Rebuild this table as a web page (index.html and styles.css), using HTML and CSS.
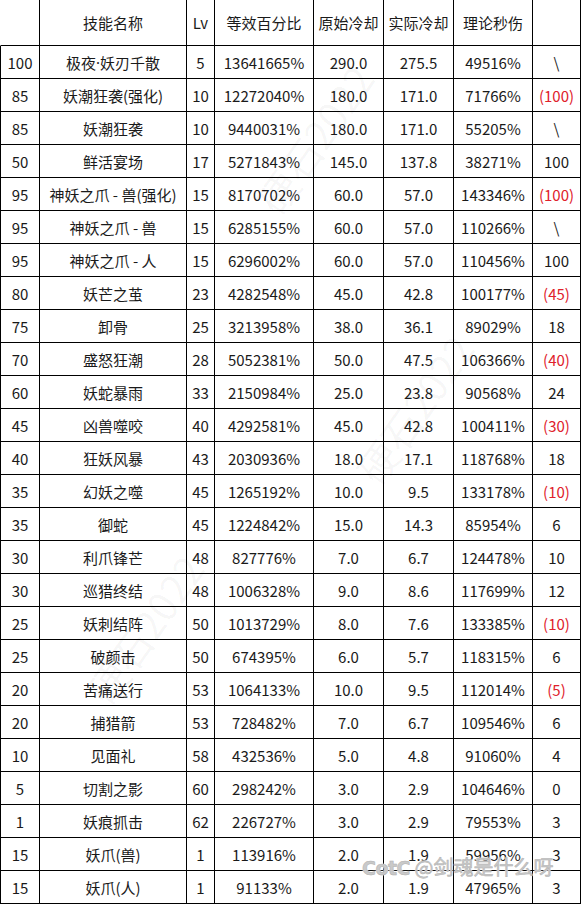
FILE: index.html
```html
<!DOCTYPE html>
<html lang="zh-CN">
<head>
<meta charset="utf-8">
<link rel="stylesheet" href="styles.css">
</head>
<body>
<div class="sheet">
  <div class="row head">
    <div class="c"></div><div class="c">技能名称</div><div class="c">Lv</div><div class="c">等效百分比</div><div class="c">原始冷却</div><div class="c">实际冷却</div><div class="c">理论秒伤</div><div class="c"></div>
  </div>
  <div class="row"><div class="c">100</div><div class="c">极夜<span class="dot">·</span>妖刃千散</div><div class="c">5</div><div class="c">13641665%</div><div class="c">290.0</div><div class="c">275.5</div><div class="c">49516%</div><div class="c">\</div></div>
  <div class="row"><div class="c">85</div><div class="c">妖潮狂袭(强化)</div><div class="c">10</div><div class="c">12272040%</div><div class="c">180.0</div><div class="c">171.0</div><div class="c">71766%</div><div class="c red">(100)</div></div>
  <div class="row"><div class="c">85</div><div class="c">妖潮狂袭</div><div class="c">10</div><div class="c">9440031%</div><div class="c">180.0</div><div class="c">171.0</div><div class="c">55205%</div><div class="c">\</div></div>
  <div class="row"><div class="c">50</div><div class="c">鲜活宴场</div><div class="c">17</div><div class="c">5271843%</div><div class="c">145.0</div><div class="c">137.8</div><div class="c">38271%</div><div class="c">100</div></div>
  <div class="row"><div class="c">95</div><div class="c">神妖之爪 - 兽(强化)</div><div class="c">15</div><div class="c">8170702%</div><div class="c">60.0</div><div class="c">57.0</div><div class="c">143346%</div><div class="c red">(100)</div></div>
  <div class="row"><div class="c">95</div><div class="c">神妖之爪 - 兽</div><div class="c">15</div><div class="c">6285155%</div><div class="c">60.0</div><div class="c">57.0</div><div class="c">110266%</div><div class="c">\</div></div>
  <div class="row"><div class="c">95</div><div class="c">神妖之爪 - 人</div><div class="c">15</div><div class="c">6296002%</div><div class="c">60.0</div><div class="c">57.0</div><div class="c">110456%</div><div class="c">100</div></div>
  <div class="row"><div class="c">80</div><div class="c">妖芒之茧</div><div class="c">23</div><div class="c">4282548%</div><div class="c">45.0</div><div class="c">42.8</div><div class="c">100177%</div><div class="c red">(45)</div></div>
  <div class="row"><div class="c">75</div><div class="c">卸骨</div><div class="c">25</div><div class="c">3213958%</div><div class="c">38.0</div><div class="c">36.1</div><div class="c">89029%</div><div class="c">18</div></div>
  <div class="row"><div class="c">70</div><div class="c">盛怒狂潮</div><div class="c">28</div><div class="c">5052381%</div><div class="c">50.0</div><div class="c">47.5</div><div class="c">106366%</div><div class="c red">(40)</div></div>
  <div class="row"><div class="c">60</div><div class="c">妖蛇暴雨</div><div class="c">33</div><div class="c">2150984%</div><div class="c">25.0</div><div class="c">23.8</div><div class="c">90568%</div><div class="c">24</div></div>
  <div class="row"><div class="c">45</div><div class="c">凶兽噬咬</div><div class="c">40</div><div class="c">4292581%</div><div class="c">45.0</div><div class="c">42.8</div><div class="c">100411%</div><div class="c red">(30)</div></div>
  <div class="row"><div class="c">40</div><div class="c">狂妖风暴</div><div class="c">43</div><div class="c">2030936%</div><div class="c">18.0</div><div class="c">17.1</div><div class="c">118768%</div><div class="c">18</div></div>
  <div class="row"><div class="c">35</div><div class="c">幻妖之噬</div><div class="c">45</div><div class="c">1265192%</div><div class="c">10.0</div><div class="c">9.5</div><div class="c">133178%</div><div class="c red">(10)</div></div>
  <div class="row"><div class="c">35</div><div class="c">御蛇</div><div class="c">45</div><div class="c">1224842%</div><div class="c">15.0</div><div class="c">14.3</div><div class="c">85954%</div><div class="c">6</div></div>
  <div class="row"><div class="c">30</div><div class="c">利爪锋芒</div><div class="c">48</div><div class="c">827776%</div><div class="c">7.0</div><div class="c">6.7</div><div class="c">124478%</div><div class="c">10</div></div>
  <div class="row"><div class="c">30</div><div class="c">巡猎终结</div><div class="c">48</div><div class="c">1006328%</div><div class="c">9.0</div><div class="c">8.6</div><div class="c">117699%</div><div class="c">12</div></div>
  <div class="row"><div class="c">25</div><div class="c">妖刺结阵</div><div class="c">50</div><div class="c">1013729%</div><div class="c">8.0</div><div class="c">7.6</div><div class="c">133385%</div><div class="c red">(10)</div></div>
  <div class="row"><div class="c">25</div><div class="c">破颜击</div><div class="c">50</div><div class="c">674395%</div><div class="c">6.0</div><div class="c">5.7</div><div class="c">118315%</div><div class="c">6</div></div>
  <div class="row"><div class="c">20</div><div class="c">苦痛送行</div><div class="c">53</div><div class="c">1064133%</div><div class="c">10.0</div><div class="c">9.5</div><div class="c">112014%</div><div class="c red">(5)</div></div>
  <div class="row"><div class="c">20</div><div class="c">捕猎箭</div><div class="c">53</div><div class="c">728482%</div><div class="c">7.0</div><div class="c">6.7</div><div class="c">109546%</div><div class="c">6</div></div>
  <div class="row"><div class="c">10</div><div class="c">见面礼</div><div class="c">58</div><div class="c">432536%</div><div class="c">5.0</div><div class="c">4.8</div><div class="c">91060%</div><div class="c">4</div></div>
  <div class="row"><div class="c">5</div><div class="c">切割之影</div><div class="c">60</div><div class="c">298242%</div><div class="c">3.0</div><div class="c">2.9</div><div class="c">104646%</div><div class="c">0</div></div>
  <div class="row"><div class="c">1</div><div class="c">妖痕抓击</div><div class="c">62</div><div class="c">226727%</div><div class="c">3.0</div><div class="c">2.9</div><div class="c">79553%</div><div class="c">3</div></div>
  <div class="row"><div class="c">15</div><div class="c">妖爪(兽)</div><div class="c">1</div><div class="c">113916%</div><div class="c">2.0</div><div class="c">1.9</div><div class="c">59956%</div><div class="c">3</div></div>
  <div class="row"><div class="c">15</div><div class="c">妖爪(人)</div><div class="c">1</div><div class="c">91133%</div><div class="c">2.0</div><div class="c">1.9</div><div class="c">47965%</div><div class="c">3</div></div>

  <div class="wm wm1">硬石2022</div>
  <div class="wm wm3">硬石2022</div>
  <div class="wm wm4">硬石2022</div>
  <div class="sig"><span class="logo">CotC</span> @剑魂是什么呀</div>
</div>
</body>
</html>
```
FILE: styles.css
```css
html, body {
  margin: 0;
  padding: 0;
  background: #fff;
}
.sheet {
  position: relative;
  width: 582px;
  height: 906px;
  overflow: hidden;
  font-family: "Noto Sans CJK SC", "Noto Sans", sans-serif;
  font-size: 15px;
  color: #1a1a1a;
}
.row {
  display: grid;
  grid-template-columns: 40px 147px 28px 99px 70px 70px 79px 48px;
  height: 33px;
}
.row.head {
  height: 46px;
}
.c {
  display: flex;
  align-items: center;
  justify-content: center;
  border-right: 1px solid #000;
  border-bottom: 1px solid #000;
  white-space: nowrap;
  line-height: 1;
}
.c:first-child {
  border-left: 1px solid #000;
}
.head .c:first-child {
  border-left-color: transparent;
}
.dot {
  font-family: "Noto Sans", sans-serif;
}
.red {
  color: #e0212b;
}
.wm {
  position: absolute;
  font-size: 40px;
  color: rgba(0, 0, 0, 0.04);
  transform: rotate(-55deg);
  white-space: nowrap;
  pointer-events: none;
}
.wm1 { left: 230px; top: 110px; }
.wm3 { left: 330px; top: 380px; }
.wm4 { left: 60px; top: 600px; }
.sig {
  position: absolute;
  left: 362px;
  top: 852px;
  font-size: 20px;
  color: #c9c9c9;
  text-shadow: 0 0 1px #fff, 0 0 2px #fff;
  -webkit-text-stroke: 0.5px #b0b0b0;
  white-space: nowrap;
}
.logo {
  font-family: "DejaVu Sans", sans-serif;
  font-weight: bold;
  font-size: 19px;
  letter-spacing: -0.5px;
}
```
